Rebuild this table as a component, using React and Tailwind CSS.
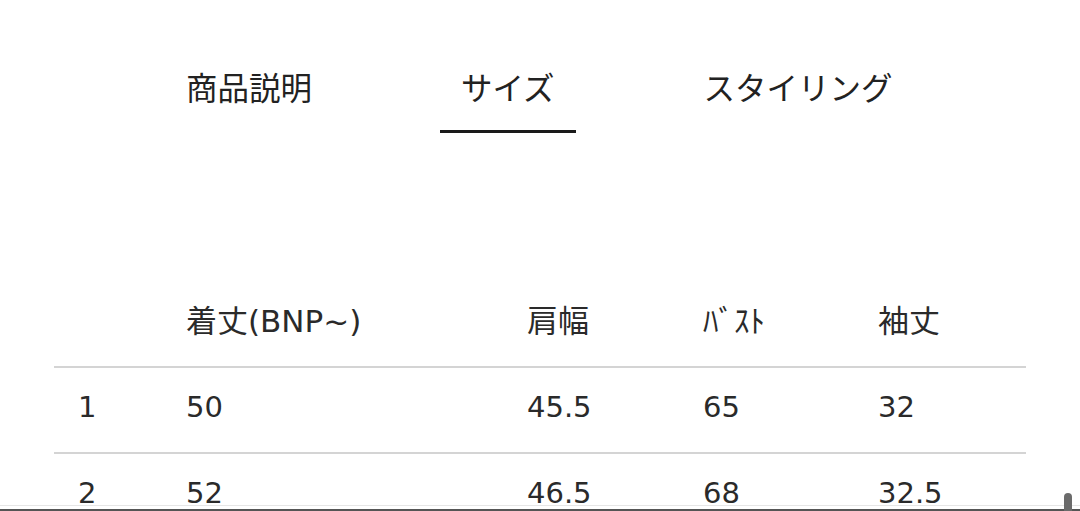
const tabs = [
  { label: '商品説明', active: false },
  { label: 'サイズ', active: true },
  { label: 'スタイリング', active: false },
];

const headers = ['', '着丈(BNP~)', '肩幅', 'ﾊﾞｽﾄ', '袖丈'];

const rows = [
  ['1', '50', '45.5', '65', '32'],
  ['2', '52', '46.5', '68', '32.5'],
];

const cols = 'grid grid-cols-[132px_341px_176px_175px_1fr]';

export default function App() {
  return (
    <div
      className="relative h-[511px] w-[1080px] overflow-hidden bg-white text-[#222]"
      style={{ fontFamily: '"Noto Sans", "Noto Sans CJK JP", sans-serif' }}
    >
      <div className="flex gap-[107px] pl-[165px] pt-[68px]">
        {tabs.map((tab) => (
          <div
            key={tab.label}
            className={`px-[21px] pb-[22px] text-[31.5px] leading-[40px] border-b-[3px] ${
              tab.active ? 'border-[#1a1a1a]' : 'border-transparent'
            }`}
          >
            {tab.label}
          </div>
        ))}
      </div>

      <div
        className="mx-[54px] mt-[151px] w-[972px] text-[29px] text-[#2a2a2a]"
        style={{ fontFamily: '"DejaVu Sans", "Noto Sans CJK JP", sans-serif' }}
      >
        <div className={`${cols} h-[84px] items-center pb-[8px] text-[31px] border-b-2 border-[#d4d4d4]`}>
          {headers.map((h, i) => (
            <div key={i} className={i === 0 ? 'pl-[26px]' : ''}>
              {h}
            </div>
          ))}
        </div>
        {rows.map((row) => (
          <div key={row[0]} className={`${cols} h-[86px] items-center pb-[4px] border-b-2 border-[#d4d4d4]`}>
            {row.map((cell, i) => (
              <div key={i} className={i === 0 ? 'pl-[24px]' : ''}>
                {cell}
              </div>
            ))}
          </div>
        ))}
      </div>

      <div className="absolute bottom-[5px] left-0 h-px w-full bg-[#e6e6e6]" />
      <div className="absolute bottom-0 left-0 h-[2px] w-full bg-[#555]" />
      <div className="absolute bottom-0 left-[1064px] h-[18px] w-[8px] rounded-t-full bg-[#6b6b6b]" />
    </div>
  );
}
